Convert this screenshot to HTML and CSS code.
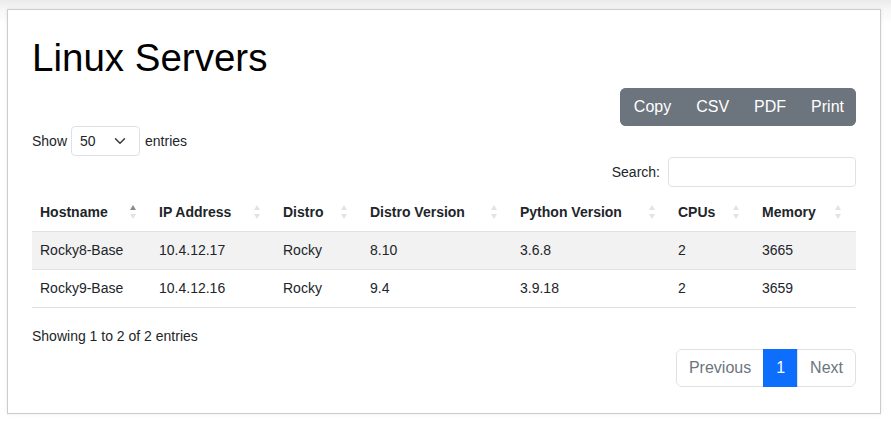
FILE: index.html
```html
<!DOCTYPE html>
<html lang="en">
<head>
<meta charset="utf-8">
<title>Linux Servers</title>
<link rel="stylesheet" href="styles.css">
</head>
<body>
<div class="page">
  <div class="card">
    <h1 class="title">Linux Servers</h1>
    <div class="row-buttons">
      <div class="btn-group">
        <button class="btn">Copy</button>
        <button class="btn">CSV</button>
        <button class="btn">PDF</button>
        <button class="btn">Print</button>
      </div>
    </div>
    <div class="row-length">
      <label class="length">Show
        <span class="select-wrap">
          <select class="select"><option>50</option></select>
          <svg class="chev" width="12" height="12" viewBox="0 0 16 16"><path d="M2 5l6 6 6-6" fill="none" stroke="#343a40" stroke-width="2" stroke-linecap="round" stroke-linejoin="round"/></svg>
        </span>
        entries</label>
    </div>
    <div class="row-filter">
      <label class="filter">Search: <input class="search" type="search"></label>
    </div>
    <table class="dt">
      <colgroup>
        <col style="width:119px"><col style="width:124px"><col style="width:87px"><col style="width:150px"><col style="width:158px"><col style="width:84px"><col style="width:102px">
      </colgroup>
      <thead>
        <tr>
          <th class="sort asc">Hostname<span class="icons"><i class="up"></i><i class="down"></i></span></th>
          <th class="sort">IP Address<span class="icons"><i class="up"></i><i class="down"></i></span></th>
          <th class="sort">Distro<span class="icons"><i class="up"></i><i class="down"></i></span></th>
          <th class="sort">Distro Version<span class="icons"><i class="up"></i><i class="down"></i></span></th>
          <th class="sort">Python Version<span class="icons"><i class="up"></i><i class="down"></i></span></th>
          <th class="sort">CPUs<span class="icons"><i class="up"></i><i class="down"></i></span></th>
          <th class="sort">Memory<span class="icons"><i class="up"></i><i class="down"></i></span></th>
        </tr>
      </thead>
      <tbody>
        <tr class="odd"><td>Rocky8-Base</td><td>10.4.12.17</td><td>Rocky</td><td>8.10</td><td>3.6.8</td><td>2</td><td>3665</td></tr>
        <tr><td>Rocky9-Base</td><td>10.4.12.16</td><td>Rocky</td><td>9.4</td><td>3.9.18</td><td>2</td><td>3659</td></tr>
      </tbody>
    </table>
    <div class="info">Showing 1 to 2 of 2 entries</div>
    <div class="row-paging">
      <ul class="pagination">
        <li class="page-item disabled"><span class="page-link first">Previous</span></li>
        <li class="page-item active"><span class="page-link">1</span></li>
        <li class="page-item disabled"><span class="page-link last">Next</span></li>
      </ul>
    </div>
  </div>
</div>
</body>
</html>
```

FILE: styles.css
```css
html, body {
  margin: 0;
  padding: 0;
}
body {
  font-family: "Liberation Sans", Arial, sans-serif;
  font-size: 14px;
  line-height: 1.5;
  color: #212529;
  background: linear-gradient(to bottom, #ebebeb 0, #f6f6f6 9px, #ffffff 24px);
  min-height: 425px;
}
.page {
  padding: 9px 10px 10px 7px;
}
.card {
  background: #fff;
  border: 1px solid #cccccc;
  box-shadow: 0 0 4px rgba(0, 0, 0, 0.07);
  padding: 24px 24px 26px 24px;
}
.title {
  margin: 0 0 6px 0;
  font-size: 38.5px;
  line-height: 48px;
  font-weight: 400;
  color: #000;
}
.row-buttons {
  display: flex;
  justify-content: flex-end;
}
.btn-group {
  display: flex;
  background: #6c757d;
  border-radius: 6px;
  overflow: hidden;
}
.btn {
  font-family: inherit;
  font-size: 16px;
  line-height: 24px;
  padding: 7px 12.5px 7px 12.5px;
  background: #6c757d;
  color: #fff;
  border: 0;
  margin: 0;
}
.btn:first-child {
  padding-left: 13.5px;
}
.btn:last-child {
  padding-right: 12px;
}
.row-length {
  display: flex;
  height: 30px;
  align-items: center;
}
.length {
  display: flex;
  align-items: center;
}
.select-wrap {
  position: relative;
  display: inline-block;
  margin: 0 5px 0 4px;
}
.select {
  appearance: none;
  -webkit-appearance: none;
  font-family: inherit;
  font-size: 14px;
  line-height: 20px;
  color: #212529;
  background: #fff;
  border: 1px solid #dee2e6;
  border-radius: 4px;
  width: 69px;
  height: 30px;
  padding: 0 0 0 8px;
  margin: 0;
}
.chev {
  position: absolute;
  left: 43px;
  top: 9px;
  pointer-events: none;
}
.row-filter {
  display: flex;
  justify-content: flex-end;
  margin-top: 1px;
}
.filter {
  display: flex;
  align-items: center;
}
.search {
  margin: 0 0 0 8px;
  width: 188px;
  height: 30px;
  box-sizing: border-box;
  border: 1px solid #dee2e6;
  border-radius: 4px;
  font-family: inherit;
  font-size: 14px;
  padding: 4px 8px;
}
.dt {
  width: 100%;
  table-layout: fixed;
  border-collapse: collapse;
  margin-top: 7px;
}
.dt th, .dt td {
  text-align: left;
  padding: 8px;
  border-bottom: 1px solid #dee2e6;
  white-space: nowrap;
}
.dt th {
  font-weight: 700;
  position: relative;
}
.dt tbody tr.odd td {
  background: #f2f2f2;
}
.icons {
  position: absolute;
  right: 15px;
  top: 11px;
  width: 6px;
  height: 14px;
  display: flex;
  flex-direction: column;
  justify-content: space-between;
}
.icons i {
  display: block;
  width: 0;
  height: 0;
  border-left: 3px solid transparent;
  border-right: 3px solid transparent;
}
.icons .up {
  border-bottom: 5px solid #e3e3e3;
}
.icons .down {
  border-top: 5px solid #e3e3e3;
}
.asc .icons .up {
  border-bottom-color: #8a8a8a;
}
.info {
  margin-top: 18px;
  line-height: 21px;
}
.row-paging {
  display: flex;
  justify-content: flex-end;
  margin-top: 2px;
}
.pagination {
  display: flex;
  list-style: none;
  margin: 0;
  padding: 0;
}
.page-link {
  display: block;
  font-size: 16px;
  line-height: 24px;
  padding: 6px 12px;
  border: 1px solid #dee2e6;
  color: #6c757d;
  background: #fff;
  margin-left: -1px;
}
.page-link.first {
  margin-left: 0;
  border-radius: 6px 0 0 6px;
}
.page-link.last {
  border-radius: 0 6px 6px 0;
}
.active .page-link {
  background: #0d6efd;
  border-color: #0d6efd;
  color: #fff;
}
```
